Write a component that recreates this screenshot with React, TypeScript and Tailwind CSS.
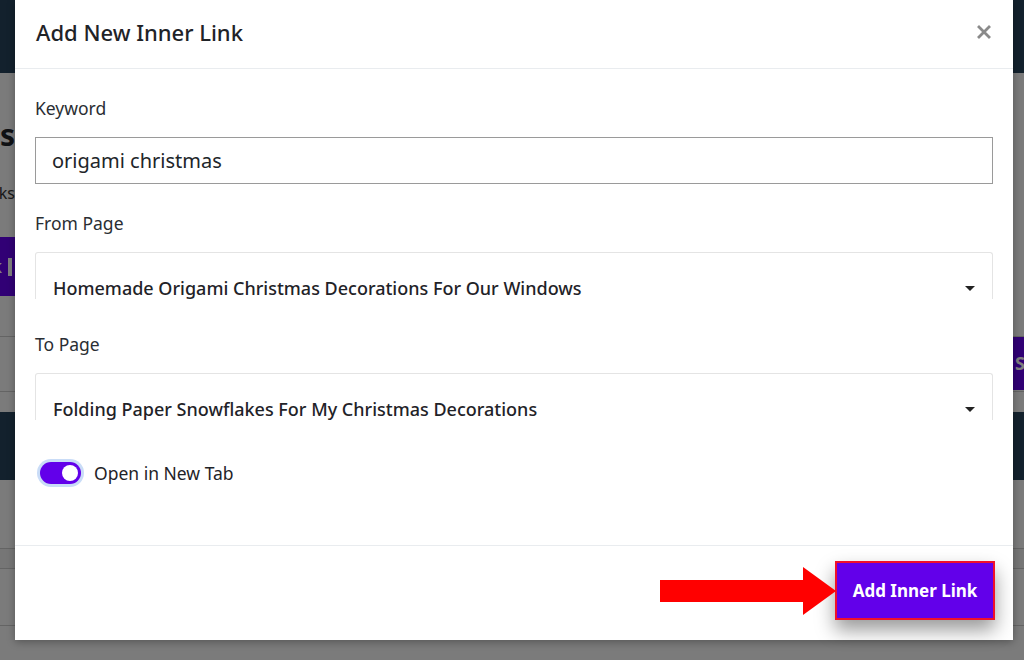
import React from "react";

const font = { fontFamily: '"Noto Sans", "Open Sans", sans-serif' };

const SelectBox = ({ value }: { value: string }) => (
  <div className="relative h-[47px] overflow-hidden rounded-t-[3px] border-x border-t border-[#e4e4e4]">
    <div className="flex items-center justify-between pl-[17px] pr-[17px] pt-[23px]">
      <span className="text-[18px] font-[550] leading-6 text-[#1f2328]">{value}</span>
      <span className="h-0 w-0 border-x-[5px] border-t-[5px] border-x-transparent border-t-[#222]" />
    </div>
  </div>
);

// clipped edge of the page behind the modal
const Edge = ({ children, className = "" }: { children: React.ReactNode; className?: string }) => (
  <div className={"flex w-[15px] justify-end overflow-hidden whitespace-nowrap " + className}>{children}</div>
);

const Background = () => (
  <div className="flex h-[660px] w-[1024px] flex-col bg-[#f6f6f6] text-[#1f2328]" style={font}>
    <div className="h-[73px] bg-[#26435a]" />
    <Edge className="mt-[44px]">
      <span className="text-[30px] font-bold leading-9">Inner Links</span>
    </Edge>
    <Edge className="mt-[28px]">
      <span className="text-[16px] leading-6 text-[#333]">All links</span>
    </Edge>
    <Edge className="mt-[32px]">
      <span className="flex h-[59px] items-center bg-[#6200ea] pl-4 pr-[3px] text-[18px] font-bold text-white">
        Add Link
        <span className="ml-[6px] h-[18px] w-[4px] bg-white" />
      </span>
    </Edge>
    <div className="mt-[40px] flex justify-end border-t border-[#c8c8c8]">
      <div className="flex w-[11px] overflow-hidden">
        <span className="flex h-[53px] items-center bg-[#6200ea] pl-[2px] text-[18px] font-bold text-white">Search</span>
      </div>
    </div>
    <div className="mt-[1px] border-t border-[#c8c8c8]" />
    <div className="mt-[20px] h-[68px] bg-[#26435a]" />
    <div className="mt-[68px] h-[21px] border-y border-[#c8c8c8] bg-[#ececec]" />
    <div className="mt-[56px] border-t border-[#c8c8c8]" />
  </div>
);

export default function App() {
  return (
    <div className="relative h-[660px] w-[1024px] overflow-hidden">
      <Background />
      <div className="absolute inset-0 bg-black/50" />
      <div
        className="absolute left-[15px] top-0 flex h-[640px] w-[998px] flex-col bg-white text-[#212529] shadow-[0_2px_8px_rgba(0,0,0,0.3)]"
        style={font}
      >
        <div className="flex h-[69px] items-center justify-between border-b border-[#e9ecef] pb-[4px] pl-[21px] pr-[21px]">
          <h2 className="text-[22px] font-medium leading-7 text-[#1f2328]">Add New Inner Link</h2>
          <svg width="14" height="14" viewBox="0 0 14 14" className="mr-[1px]">
            <path d="M2 2 L12 12 M12 2 L2 12" stroke="#8a8a8a" strokeWidth="2.8" strokeLinecap="square" />
          </svg>
        </div>

        <div className="flex flex-1 flex-col px-[20px] pt-[27px]">
          <label className="text-[17.5px] leading-6 text-[#2a2e33]">Keyword</label>
          <div className="mt-[17px] flex h-[47px] items-center border border-[#9a9a9a] px-[16px] text-[20px] text-[#212529]">
            origami christmas
          </div>

          <label className="mt-[27px] text-[17.5px] leading-6 text-[#2a2e33]">From Page</label>
          <div className="mt-[17px]">
            <SelectBox value="Homemade Origami Christmas Decorations For Our Windows" />
          </div>

          <label className="mt-[33px] text-[17.5px] leading-6 text-[#2a2e33]">To Page</label>
          <div className="mt-[17px]">
            <SelectBox value="Folding Paper Snowflakes For My Christmas Decorations" />
          </div>

          <div className="mt-[41px] flex items-center gap-[13px] pl-[5px]">
            <div className="flex h-[22px] w-[41px] items-center justify-end rounded-full bg-[#6200ea] pr-[3px] ring-[3px] ring-[#c9dcf7]">
              <div className="h-[16px] w-[16px] rounded-full bg-white" />
            </div>
            <span className="text-[17.5px] leading-6 text-[#1f2328]">Open in New Tab</span>
          </div>
        </div>

        <div className="relative flex h-[95px] items-start justify-end border-t border-[#e9ecef] pr-[18px] pt-[15px]">
          <svg width="176" height="48" viewBox="0 0 176 48" className="absolute left-[645px] top-[21px]">
            <polygon points="0,13 143,13 143,0 176,24 143,48 143,35 0,35" fill="#ff0000" />
          </svg>
          <button className="flex h-[59px] w-[160px] items-center justify-center border-2 border-[#f0102a] bg-[#6200ea] text-[17px] font-bold text-white shadow-[0_10px_18px_rgba(0,0,0,0.4)]">
            Add Inner Link
          </button>
        </div>
      </div>
    </div>
  );
}
